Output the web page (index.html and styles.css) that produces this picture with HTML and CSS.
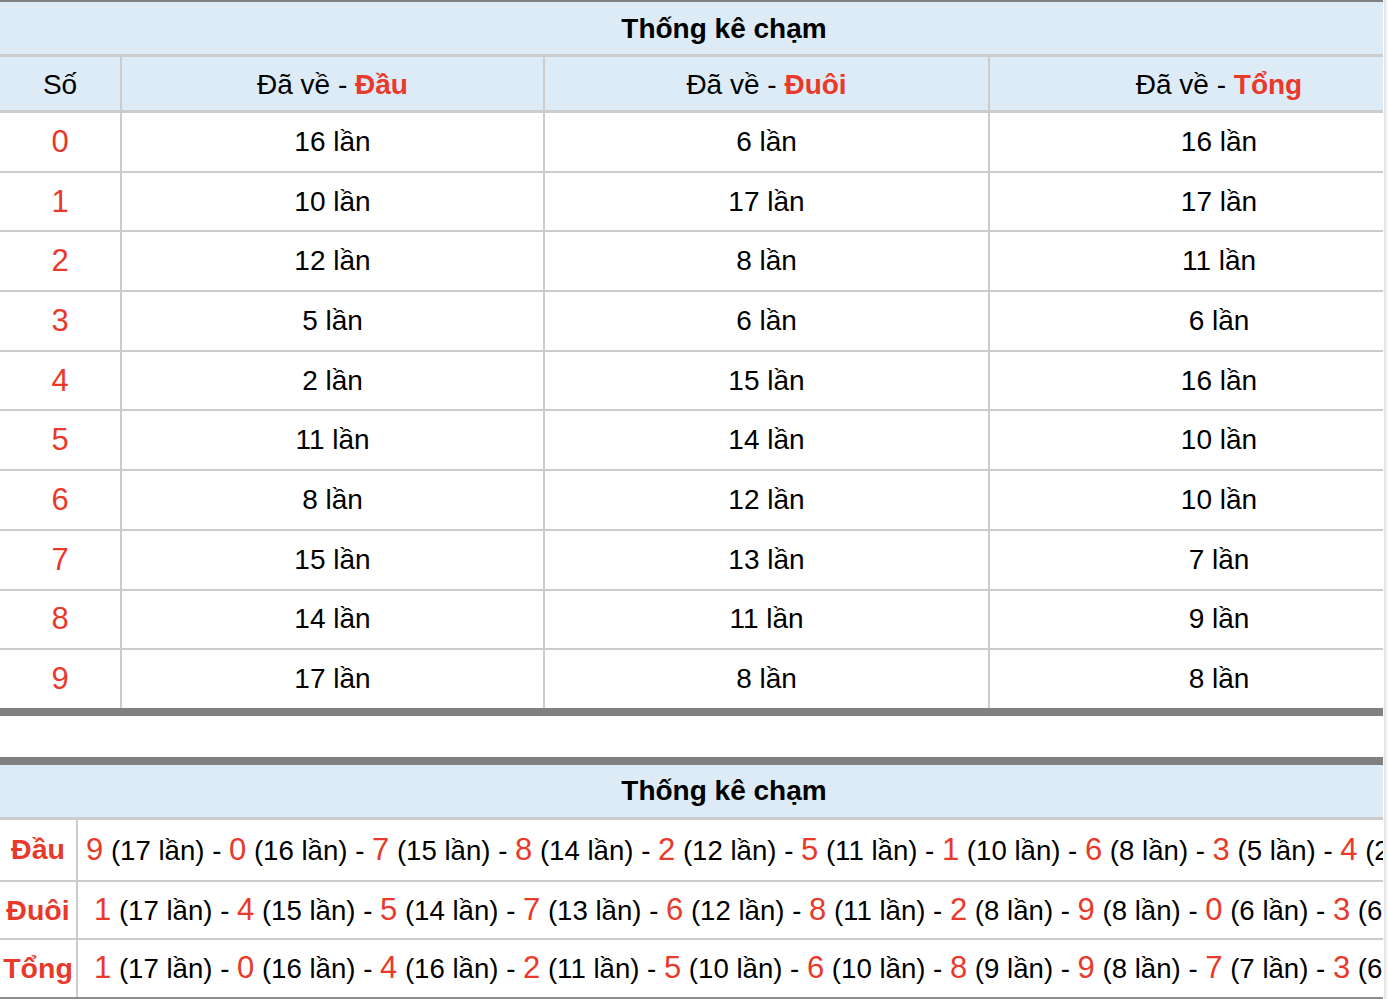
FILE: index.html
```html
<!DOCTYPE html>
<html lang="vi">
<head>
<meta charset="utf-8">
<title>Thống kê chạm</title>
<link rel="stylesheet" href="styles.css">
</head>
<body>
<div class="page">
  <div class="viewport">
    <table class="stats">
      <colgroup>
        <col class="c-so"><col class="c-dau"><col class="c-duoi"><col class="c-tong">
      </colgroup>
      <thead>
        <tr><th class="title" colspan="4">Thống kê chạm</th></tr>
        <tr class="head">
          <th>Số</th>
          <th>Đã về - <b class="hl">Đầu</b></th>
          <th>Đã về - <b class="hl">Đuôi</b></th>
          <th>Đã về - <b class="hl">Tổng</b></th>
        </tr>
      </thead>
      <tbody>
        <tr><td class="num">0</td><td>16 lần</td><td>6 lần</td><td>16 lần</td></tr>
        <tr><td class="num">1</td><td>10 lần</td><td>17 lần</td><td>17 lần</td></tr>
        <tr><td class="num">2</td><td>12 lần</td><td>8 lần</td><td>11 lần</td></tr>
        <tr><td class="num">3</td><td>5 lần</td><td>6 lần</td><td>6 lần</td></tr>
        <tr><td class="num">4</td><td>2 lần</td><td>15 lần</td><td>16 lần</td></tr>
        <tr><td class="num">5</td><td>11 lần</td><td>14 lần</td><td>10 lần</td></tr>
        <tr><td class="num">6</td><td>8 lần</td><td>12 lần</td><td>10 lần</td></tr>
        <tr><td class="num">7</td><td>15 lần</td><td>13 lần</td><td>7 lần</td></tr>
        <tr><td class="num">8</td><td>14 lần</td><td>11 lần</td><td>9 lần</td></tr>
        <tr><td class="num">9</td><td>17 lần</td><td>8 lần</td><td>8 lần</td></tr>
      </tbody>
    </table>

    <table class="stats stats-order">
      <colgroup>
        <col class="c-label"><col class="c-list">
      </colgroup>
      <thead>
        <tr><th class="title" colspan="2">Thống kê chạm</th></tr>
      </thead>
      <tbody>
        <tr class="r-dau">
          <td class="label">Đầu</td>
          <td class="list"><span class="n">9</span> (17 lần) - <span class="n">0</span> (16 lần) - <span class="n">7</span> (15 lần) - <span class="n">8</span> (14 lần) - <span class="n">2</span> (12 lần) - <span class="n">5</span> (11 lần) - <span class="n">1</span> (10 lần) - <span class="n">6</span> (8 lần) - <span class="n">3</span> (5 lần) - <span class="n">4</span> (2 lần)</td>
        </tr>
        <tr class="r-duoi">
          <td class="label">Đuôi</td>
          <td class="list lead"><span class="n">1</span> (17 lần) - <span class="n">4</span> (15 lần) - <span class="n">5</span> (14 lần) - <span class="n">7</span> (13 lần) - <span class="n">6</span> (12 lần) - <span class="n">8</span> (11 lần) - <span class="n">2</span> (8 lần) - <span class="n">9</span> (8 lần) - <span class="n">0</span> (6 lần) - <span class="n">3</span> (6 lần)</td>
        </tr>
        <tr class="r-tong">
          <td class="label">Tổng</td>
          <td class="list lead"><span class="n">1</span> (17 lần) - <span class="n">0</span> (16 lần) - <span class="n">4</span> (16 lần) - <span class="n">2</span> (11 lần) - <span class="n">5</span> (10 lần) - <span class="n">6</span> (10 lần) - <span class="n">8</span> (9 lần) - <span class="n">9</span> (8 lần) - <span class="n">7</span> (7 lần) - <span class="n">3</span> (6 lần)</td>
        </tr>
      </tbody>
    </table>
  </div>
  <div class="scrollbar"></div>
</div>
</body>
</html>
```

FILE: styles.css
```css
html, body {
  margin: 0;
  padding: 0;
  background: #ffffff;
}

body {
  font-family: "Liberation Sans", Arial, Helvetica, sans-serif;
  color: #000000;
}

.page {
  display: flex;
  width: 1388px;
  height: 999px;
  overflow: hidden;
}

.viewport {
  width: 1383px;
  flex: none;
  overflow: hidden;
}

.scrollbar {
  flex: none;
  width: 4px;
  margin-left: 1px;
  background: #f8f8f8;
  border-left: 2px solid #e6e6e6;
  box-sizing: border-box;
}

.stats {
  width: 1448px;
  table-layout: fixed;
  border-collapse: separate;
  border-spacing: 0;
  border-top: 2px solid #808080;
  border-bottom: 8px solid #808080;
  font-size: 28px;
}

.stats th,
.stats td {
  box-sizing: border-box;
  padding: 0;
  text-align: center;
  vertical-align: middle;
  border-bottom: 2px solid #cccccc;
  white-space: nowrap;
}

.stats th + th,
.stats td + td {
  border-left: 2px solid #cccccc;
}

.c-so { width: 120px; }
.c-dau { width: 423px; }
.c-duoi { width: 445px; }
.c-tong { width: 460px; }

.stats .title {
  height: 55px;
  background: #ddebf7;
  border-bottom: 3px solid #cccccc;
  font-weight: bold;
  padding-top: 1px;
}

.head th {
  height: 56px;
  background: #ddebf7;
  border-bottom: 3px solid #cccccc;
  font-weight: normal;
  padding-top: 2px;
}

.hl {
  color: #e8392b;
  font-weight: bold;
}

.stats tbody td {
  height: 59.7px;
}

.stats tbody tr:last-child td {
  height: 57.7px;
  border-bottom: 0;
}

.num {
  color: #e8392b;
  font-size: 31px;
  padding-top: 2px;
}

/* second table */
.stats-order {
  margin-top: 41px;
  border-top: 8px solid #808080;
  border-bottom: 2px solid #8c8c8c;
}

.c-label { width: 76px; }
.c-list { width: 1372px; }

.stats-order .r-dau td { height: 62px; }
.stats-order .r-duoi td { height: 58.3px; }
.stats-order tbody tr.r-tong td { height: 56.4px; }

.label {
  color: #e8392b;
  font-weight: bold;
  font-size: 28.5px;
}

.stats-order .list {
  text-align: left;
  padding-left: 8px;
  overflow: visible;
  font-size: 27.6px;
}

.stats-order .lead {
  padding-left: 16px;
}

.n {
  color: #e8392b;
  font-size: 31px;
}
```
